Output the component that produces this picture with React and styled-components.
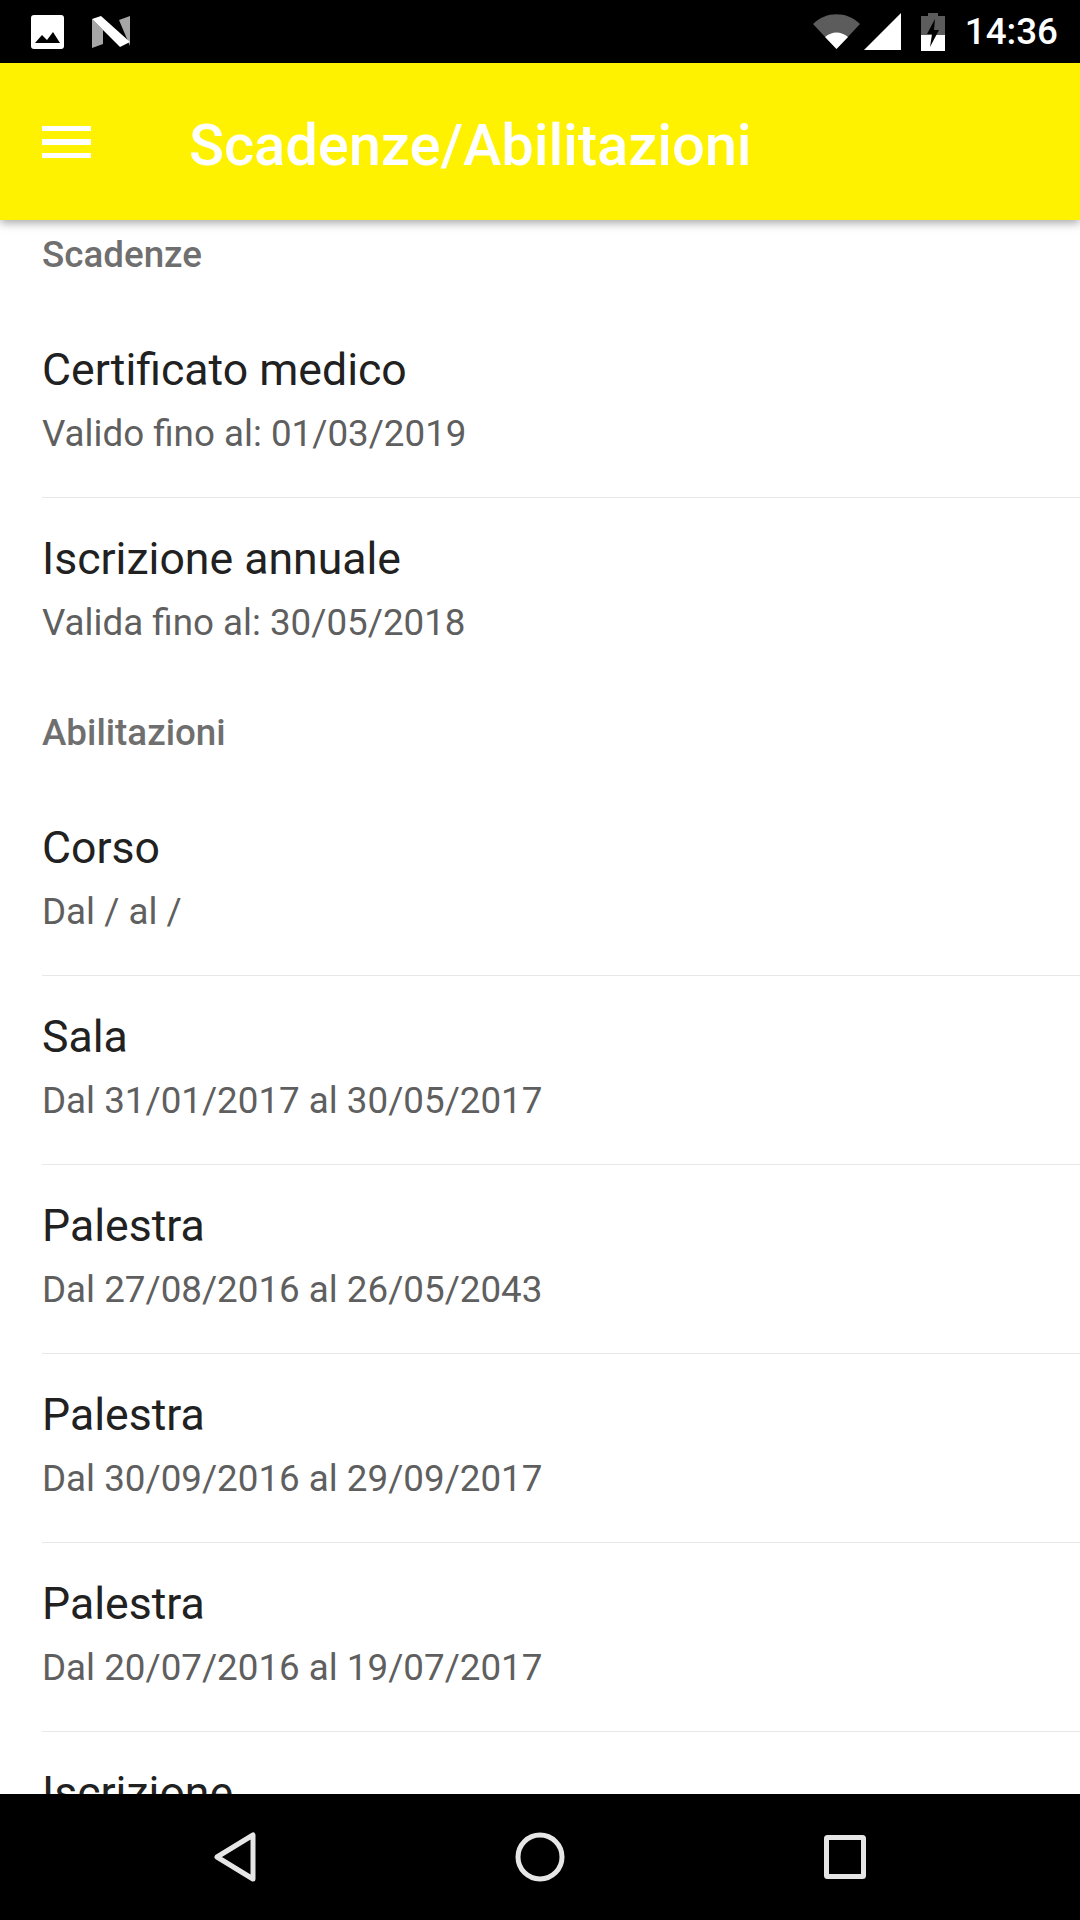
import styled, { createGlobalStyle } from 'styled-components';

const GlobalStyle = createGlobalStyle`
  html, body {
    margin: 0;
    padding: 0;
    background: #fff;
  }
  body {
    font-family: Roboto, "Noto Sans", sans-serif;
  }
`;

const Screen = styled.div`
  display: flex;
  flex-direction: column;
  width: 1080px;
  height: 1920px;
  overflow: hidden;
  background: #fff;
`;

const StatusBar = styled.div`
  display: flex;
  align-items: center;
  justify-content: space-between;
  flex: 0 0 63px;
  padding: 0 22px 0 31px;
  box-sizing: border-box;
  background: #000;
`;

const StatusGroup = styled.div`
  display: flex;
  align-items: center;
  gap: ${props => props.$gap}px;
`;

const Clock = styled.span`
  color: #fff;
  font-size: 36.75px;
  font-weight: 500;
  line-height: 63px;
`;

const AppBar = styled.header`
  position: relative;
  z-index: 2;
  display: flex;
  align-items: center;
  flex: 0 0 157px;
  padding-left: 42px;
  box-sizing: border-box;
  background: #fff200;
  box-shadow: 0 3px 9px rgba(0, 0, 0, 0.35);
`;

const Title = styled.h1`
  margin: 6px 0 0 98px;
  color: #fff;
  font-size: 57.75px;
  font-weight: 500;
  line-height: 66px;
`;

const Main = styled.main`
  flex: 1;
  min-height: 0;
  overflow: hidden;
`;

const List = styled.div`
  margin-top: -11px;
`;

const SectionLabel = styled.div`
  padding: 24px 42px 32px;
  color: #6f6f6f;
  font-size: 36.75px;
  font-weight: 500;
  line-height: 44px;
`;

const Row = styled.div`
  height: 189px;
  margin-left: 42px;
  padding-top: 36px;
  box-sizing: border-box;
  border-bottom: ${props => (props.$last ? 'none' : '1px solid #e8e8e8')};
`;

const RowTitle = styled.div`
  color: #212121;
  font-size: 44.6px;
  line-height: 50px;
`;

const RowText = styled.div`
  margin-top: 17px;
  color: #5f5f5f;
  font-size: 36.75px;
  line-height: 44px;
`;

const NavBar = styled.nav`
  display: grid;
  grid-template-columns: repeat(3, 42px);
  justify-content: center;
  justify-items: center;
  column-gap: 263px;
  align-items: center;
  flex: 0 0 126px;
  background: #000;
`;

const GalleryIcon = () => (
  <svg width="33" height="34" viewBox="0 0 33 34">
    <path
      fill="#fff"
      d="M3 0h27a3 3 0 0 1 3 3v28a3 3 0 0 1-3 3H3a3 3 0 0 1-3-3V3a3 3 0 0 1 3-3z"
    />
    <path fill="#000" d="M4 28l7-8 5 5 6-8 7 11z" />
  </svg>
);

const NougatIcon = () => (
  <svg width="38" height="32" viewBox="0 0 38 32">
    <path fill="#a6a6a6" d="M0 3v29l11-4V14z" />
    <path fill="#a6a6a6" d="M27 4l11-4v30z" />
    <path fill="#fff" d="M0 3l9-3 29 26-10 5z" />
  </svg>
);

const WifiIcon = () => (
  <svg width="47" height="35" viewBox="0 0 47 35">
    <path fill="#5c5c5c" d="M0 10C13-3 34-3 47 10L23.5 35z" />
    <path fill="#fff" d="M12 23c7-6 16-6 23 0L23.5 35z" />
  </svg>
);

const SignalIcon = () => (
  <svg width="37" height="37" viewBox="0 0 37 37">
    <path fill="#fff" d="M37 0v37H0z" />
  </svg>
);

const BatteryIcon = () => (
  <svg width="24" height="38" viewBox="0 0 24 38">
    <path fill="#5c5c5c" d="M7 0h10v3h7v19H0V3h7z" />
    <path fill="#fff" d="M0 22h24v16H0z" />
    <path fill="#000" d="M14 6L6 21h5l-2 13 9-17h-5z" />
  </svg>
);

const MenuIcon = () => (
  <svg width="49" height="32" viewBox="0 0 49 32">
    <path fill="#fff" d="M0 0h49v5H0zM0 13h49v6H0zM0 27h49v5H0z" />
  </svg>
);

const BackIcon = () => (
  <svg width="42" height="50" viewBox="0 0 42 50">
    <path
      fill="none"
      stroke="#e6e6e6"
      strokeWidth="5"
      strokeLinejoin="round"
      d="M39 3v44L3 25z"
    />
  </svg>
);

const HomeIcon = () => (
  <svg width="50" height="50" viewBox="0 0 50 50">
    <circle cx="25" cy="25" r="22" fill="none" stroke="#e6e6e6" strokeWidth="5" />
  </svg>
);

const RecentsIcon = () => (
  <svg width="42" height="44" viewBox="0 0 42 44">
    <rect
      x="2.5"
      y="2.5"
      width="37"
      height="39"
      rx="1"
      fill="none"
      stroke="#e6e6e6"
      strokeWidth="5"
    />
  </svg>
);

const scadenze = [
  { title: 'Certificato medico', text: 'Valido fino al: 01/03/2019' },
  { title: 'Iscrizione annuale', text: 'Valida fino al: 30/05/2018', last: true },
];

const abilitazioni = [
  { title: 'Corso', text: 'Dal / al /' },
  { title: 'Sala', text: 'Dal 31/01/2017 al 30/05/2017' },
  { title: 'Palestra', text: 'Dal 27/08/2016 al 26/05/2043' },
  { title: 'Palestra', text: 'Dal 30/09/2016 al 29/09/2017' },
  { title: 'Palestra', text: 'Dal 20/07/2016 al 19/07/2017' },
  { title: 'Iscrizione', text: 'Dal 20/07/2016 al 19/07/2017' },
];

const renderRows = rows =>
  rows.map((res, i) => (
    <Row key={i} $last={res.last}>
      <RowTitle>{res.title}</RowTitle>
      <RowText>{res.text}</RowText>
    </Row>
  ));

export default function App() {
  return (
    <Screen>
      <GlobalStyle />
      <StatusBar>
        <StatusGroup $gap={28}>
          <GalleryIcon />
          <NougatIcon />
        </StatusGroup>
        <StatusGroup $gap={20}>
          <StatusGroup $gap={4}>
            <WifiIcon />
            <SignalIcon />
          </StatusGroup>
          <BatteryIcon />
          <Clock>14:36</Clock>
        </StatusGroup>
      </StatusBar>
      <AppBar>
        <MenuIcon />
        <Title>Scadenze/Abilitazioni</Title>
      </AppBar>
      <Main>
        <List>
          <SectionLabel>Scadenze</SectionLabel>
          {renderRows(scadenze)}
          <SectionLabel>Abilitazioni</SectionLabel>
          {renderRows(abilitazioni)}
        </List>
      </Main>
      <NavBar>
        <BackIcon />
        <HomeIcon />
        <RecentsIcon />
      </NavBar>
    </Screen>
  );
}
